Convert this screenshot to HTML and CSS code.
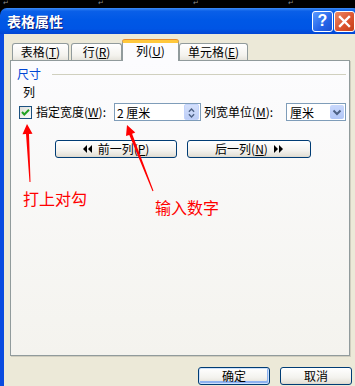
FILE: index.html
```html
<!DOCTYPE html>
<html lang="zh-CN">
<head>
<meta charset="utf-8">
<link rel="stylesheet" href="styles.css">
</head>
<body>
<div class="desk">
  <div class="marks"><span>↵</span><span>↵</span><span>↵</span><span>↵</span></div>
  <div class="dialog">
    <div class="titlebar">
      <span class="title">表格属性</span>
      <div class="tbtns">
        <span class="help">?</span>
        <span class="close"><svg width="13" height="13" viewBox="0 0 13 13"><path d="M2 2 L11 11 M11 2 L2 11" stroke="#fff" stroke-width="2.4" stroke-linecap="square"/></svg></span>
      </div>
    </div>
    <div class="body">
      <div class="tabs">
        <div class="tab t1">表格(<u>T</u>)</div>
        <div class="tab t2">行(<u>R</u>)</div>
        <div class="tab active t3">列(<u>U</u>)</div>
        <div class="tab t4">单元格(<u>E</u>)</div>
      </div>
      <div class="panel">
        <div class="group"><span class="glabel">尺寸</span><span class="gline"></span></div>
        <div class="sub">列</div>
        <div class="row">
          <span class="chk"><svg width="13" height="13" viewBox="0 0 13 13"><defs><linearGradient id="cg" x1="0" y1="0" x2="1" y2="1"><stop offset="0" stop-color="#dcdcd7"/><stop offset="1" stop-color="#ffffff"/></linearGradient></defs><rect x="0.5" y="0.5" width="12" height="12" fill="url(#cg)" stroke="#1c5180"/><path d="M3 6 L5.3 8.5 L10 3.8" fill="none" stroke="#21a121" stroke-width="2"/></svg></span>
          <span class="lbl l1">指定宽度(<u>W</u>):</span>
          <div class="spin">
            <span class="val">2 厘米</span>
            <span class="spinbtn"><svg width="15" height="16" viewBox="0 0 15 16"><path d="M4.5 6.5 L7.5 3.5 L10.5 6.5" fill="none" stroke="#4d6185" stroke-width="1.6"/><path d="M4.5 9.5 L7.5 12.5 L10.5 9.5" fill="none" stroke="#4d6185" stroke-width="1.6"/></svg></span>
          </div>
          <span class="lbl l2">列宽单位(<u>M</u>):</span>
          <div class="select">
            <span class="val">厘米</span>
            <span class="ddbtn"><svg width="14" height="14" viewBox="0 0 14 14"><path d="M3.5 5.5 L7 9 L10.5 5.5" fill="none" stroke="#4d6185" stroke-width="2"/></svg></span>
          </div>
        </div>
        <div class="navrow">
          <button class="btn nav prev"><svg width="10" height="8" viewBox="0 0 10 8"><path d="M4 0 L0 4 L4 8 Z M9 0 L5 4 L9 8 Z" fill="#000"/></svg><span>前一列(<u>P</u>)</span></button>
          <button class="btn nav next"><span>后一列(<u>N</u>)</span><svg width="10" height="8" viewBox="0 0 10 8"><path d="M1 0 L5 4 L1 8 Z M6 0 L10 4 L6 8 Z" fill="#000"/></svg></button>
        </div>
      </div>
      <div class="footer">
        <button class="btn foot default">确定</button>
        <button class="btn foot">取消</button>
      </div>
    </div>
  </div>
  <div class="note n1">打上对勾</div>
  <div class="note n2">输入数字</div>
  <svg class="arrows" width="355" height="386" viewBox="0 0 355 386">
    <polygon points="27,124 32.5,133.7 29,133.9 30.5,182 29.5,182 26,134.1 22.5,134.3" fill="#ff0000"/>
    <polygon points="127,125 135.3,132.5 132.1,133.8 153.5,190.8 152.5,191.2 129.3,134.9 126,136.1" fill="#ff0000"/>
  </svg>
</div>
</body>
</html>
```

FILE: styles.css
```css
* { box-sizing: border-box; }
html, body { margin: 0; padding: 0; }
body {
  background: #000;
  font-family: "Noto Sans CJK SC", "Liberation Sans", sans-serif;
  font-size: 12px;
  color: #000;
}
.desk {
  position: relative;
  width: 355px;
  height: 386px;
  overflow: hidden;
  background: #000;
}
.marks {
  display: flex;
  height: 8px;
  padding-left: 3px;
  color: #8a8a8a;
  font-family: "DejaVu Sans", sans-serif;
  font-size: 7px;
  line-height: 7px;
}
.marks span { width: 95px; flex: none; }
.dialog {
  width: 360px;
}
.titlebar {
  height: 26px;
  border-radius: 7px 7px 0 0;
  background: linear-gradient(#3d8cf6 0%, #0a5fe8 12%, #0058e6 45%, #0055e5 80%, #0346d4 100%);
  display: flex;
  align-items: center;
  justify-content: space-between;
  padding: 0 5px 0 7px;
}
.title {
  color: #fff;
  font-weight: bold;
  font-size: 14px;
  line-height: 16px;
  text-shadow: 1px 1px 0 #0a1a7a;
}
.tbtns { display: flex; gap: 1px; }
.help, .close {
  width: 21px;
  height: 21px;
  border: 1px solid #fff;
  border-radius: 3px;
  display: flex;
  align-items: center;
  justify-content: center;
  color: #fff;
}
.help {
  background: linear-gradient(135deg, #5a9bff, #2564e8 60%, #1b4fd0);
  font-family: "Liberation Sans", sans-serif;
  font-weight: bold;
  font-size: 16px;
}
.close {
  background: linear-gradient(135deg, #ec8a66, #dd5530 55%, #c33e17);
}
.body {
  background: #ece9d8;
  border-left: 4px solid #0a4be0;
  padding: 6px 10px 2px 6px;
}
.tabs {
  display: flex;
  align-items: flex-end;
  height: 20px;
  padding-left: 2px;
  position: relative;
  z-index: 2;
}
.tab {
  height: 17px;
  border: 1px solid #919b9c;
  border-bottom: none;
  border-radius: 3px 3px 0 0;
  background: linear-gradient(#ffffff, #f4f3ee 70%, #e6e4dc);
  display: flex;
  align-items: center;
  justify-content: center;
  line-height: 14px;
  flex: none;
}
.t1 { width: 57px; margin-right: 2px; }
.t2 { width: 51px; margin-right: 0; }
.t3 { width: 57px; margin-right: 0; }
.t4 { width: 69px; }
.tab.active {
  height: 21px;
  margin-bottom: -1px;
  background: #fcfcfe;
  border-top: 3px solid #ffc83c;
  box-shadow: 0 -1px 0 #e68b2c;
  padding-bottom: 2px;
}
.tab u, .lbl u, .btn u { text-decoration: underline; }
.panel {
  width: 340px;
  height: 296px;
  border: 1px solid #919b9c;
  background: linear-gradient(#fcfcfe, #f4f3ee);
  box-shadow: 1px 1px 0 #d0cdbe;
  position: relative;
  z-index: 1;
}
.group {
  display: flex;
  align-items: center;
  margin-top: 6px;
  padding: 0 3px 0 6px;
  height: 14px;
}
.glabel { color: #0046d5; line-height: 14px; }
.gline {
  flex: 1;
  height: 1px;
  margin-left: 11px;
  background: #d0d0bf;
}
.sub {
  margin-top: 4px;
  padding-left: 12px;
  line-height: 14px;
  height: 14px;
}
.row {
  display: flex;
  align-items: center;
  margin-top: 4px;
  height: 18px;
  padding-left: 8px;
}
.chk { width: 13px; height: 13px; display: block; flex: none; }
.chk svg { display: block; }
.lbl { flex: none; line-height: 14px; }
.l1 { width: 78px; margin-left: 4px; }
.l2 { width: 82px; margin-left: 3px; }
.spin, .select {
  height: 18px;
  border: 1px solid #7f9db9;
  background: #fff;
  display: flex;
  align-items: center;
  justify-content: space-between;
  flex: none;
}
.spin { width: 87px; }
.select { width: 60px; }
.spin .val { padding-left: 2px; }
.select .val { padding-left: 3px; }
.spinbtn {
  width: 15px;
  height: 16px;
  margin-right: 1px;
  border-radius: 2px;
  background: linear-gradient(#d4e0fb, #bccdf6);
  border: 1px solid #c3d3fb;
  display: flex;
}
.spinbtn svg, .ddbtn svg { display: block; }
.ddbtn {
  width: 14px;
  height: 14px;
  margin-right: 1px;
  border-radius: 2px;
  background: linear-gradient(#c9d8fc, #b1c6f7);
  display: flex;
}
.btn {
  font-family: "Noto Sans CJK SC", "Liberation Sans", sans-serif;
  font-size: 12px;
  color: #000;
  border: 1px solid #003c74;
  border-radius: 3px;
  background: linear-gradient(#ffffff, #f3f2ee 60%, #e3e0d6 95%, #d6d0c5);
  height: 18px;
  padding: 0;
  display: flex;
  align-items: center;
  justify-content: center;
  gap: 5px;
  line-height: 14px;
}
.navrow {
  display: flex;
  gap: 10px;
  margin-top: 19px;
  padding-left: 44px;
}
.prev { width: 122px; }
.next { width: 124px; }
.footer {
  display: flex;
  justify-content: flex-end;
  gap: 10px;
  margin-top: 11px;
  margin-right: -2px;
}
.foot { width: 72px; }
.default {
  box-shadow: inset 0 0 0 1px #cde0fb, inset -1px -2px 0 1px #8db2f0;
}
.note {
  position: absolute;
  color: #ff0000;
  font-size: 16px;
  line-height: 16px;
  white-space: nowrap;
  z-index: 5;
}
.n1 { left: 23px; top: 190px; }
.n2 { left: 155px; top: 199px; }
.arrows {
  position: absolute;
  left: 0;
  top: 0;
  z-index: 6;
  pointer-events: none;
}
```
